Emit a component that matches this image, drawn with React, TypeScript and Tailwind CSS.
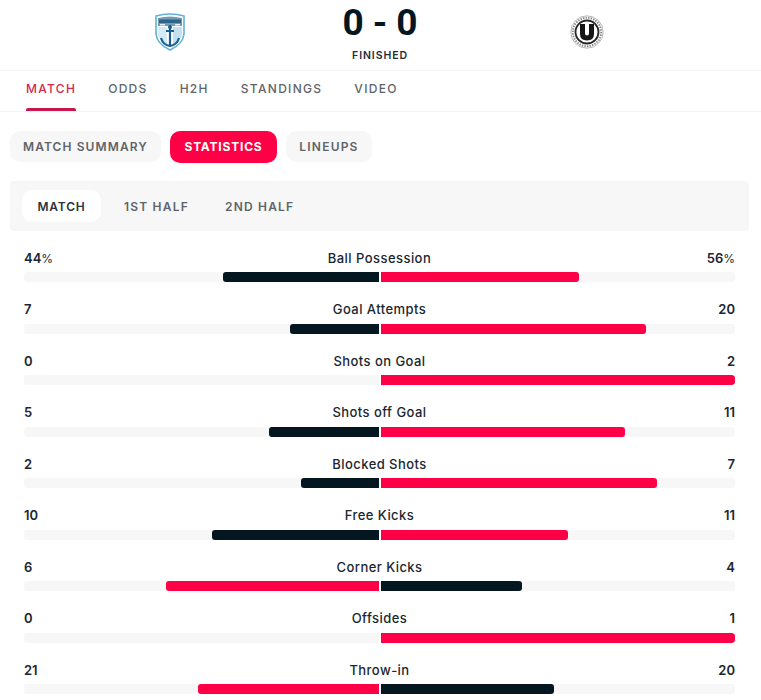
const tabs = ["MATCH", "ODDS", "H2H", "STANDINGS", "VIDEO"];

// label, home, away, home bar %, away bar %, unit
const stats: [string, number, number, number, number, string?][] = [
  ["Ball Possession", 44, 56, 44, 56, "%"],
  ["Goal Attempts", 7, 20, 25, 75],
  ["Shots on Goal", 0, 2, 0, 100],
  ["Shots off Goal", 5, 11, 31, 69],
  ["Blocked Shots", 2, 7, 22, 78],
  ["Free Kicks", 10, 11, 47, 53],
  ["Corner Kicks", 6, 4, 60, 40],
  ["Offsides", 0, 1, 0, 100],
  ["Throw-in", 21, 20, 51, 49],
];

function ShieldLogo() {
  return (
    <svg width="30" height="38" viewBox="0 0 30 38">
      <path d="M1 3 Q15 -1 29 3 L29 21 Q28 31 15 37 Q2 31 1 21 Z" fill="#ffffff" stroke="#62b1d8" strokeWidth="1.6" />
      <path d="M3 5 Q15 2 27 5 L27 13 L3 13 Z" fill="#6f9db8" />
      <rect x="4" y="6.5" width="22" height="3.5" fill="#2f6488" />
      <rect x="5" y="11" width="5" height="1.5" fill="#e4eff5" />
      <rect x="20" y="11" width="5" height="1.5" fill="#e4eff5" />
      <path d="M3 14 L12 14 L12 33 Q4 28 3 21 Z" fill="#d5ecf7" />
      <path d="M18 14 L27 14 L27 21 Q26 28 18 33 Z" fill="#bfe1f2" />
      <path d="M15 14 V33 M11 18 H19 M6 25 Q8 32 15 33 Q22 32 24 25" fill="none" stroke="#1b5f90" strokeWidth="2.2" />
      <circle cx="15" cy="14" r="2" fill="#1b5f90" />
    </svg>
  );
}

function CircleLogo() {
  return (
    <svg width="34" height="34" viewBox="0 0 34 34">
      <circle cx="17" cy="17" r="16.2" fill="#ffffff" stroke="#a8a8a8" strokeWidth="0.8" />
      <circle cx="17" cy="17" r="14.2" fill="none" stroke="#8a8a8a" strokeWidth="2" strokeDasharray="1.4 1.2" />
      <circle cx="17" cy="17" r="11.5" fill="#ffffff" stroke="#262626" strokeWidth="1.8" />
      <path d="M10 9 H15 V18.5 Q15 20.5 17 20.5 Q19 20.5 19 18.5 V9 H24 V19 Q24 25.5 17 25.5 Q10 25.5 10 19 Z" fill="#161616" />
    </svg>
  );
}

function StatRow({
  label,
  home,
  away,
  homeBar,
  awayBar,
  unit,
}: {
  label: string;
  home: number;
  away: number;
  homeBar: number;
  awayBar: number;
  unit?: string;
}) {
  const homeColor = home > away ? "bg-[#ff0046]" : "bg-[#04161f]";
  const awayColor = away > home ? "bg-[#ff0046]" : "bg-[#04161f]";

  return (
    <div className="h-[51.5px]">
      <div className="grid h-[24px] grid-cols-[1fr_auto_1fr] items-center text-[13px] font-medium leading-none tracking-[0.45px] text-[#1a2630]">
        <span className="font-semibold tracking-normal">
          {home}
          {unit && <span className="text-[12px] font-normal tracking-normal">{unit}</span>}
        </span>
        <span>{label}</span>
        <span className="text-right font-semibold tracking-normal">
          {away}
          {unit && <span className="text-[12px] font-normal tracking-normal">{unit}</span>}
        </span>
      </div>
      <div className="mt-[2px] flex h-[10px] gap-[2px]">
        <div className="flex flex-1 justify-end overflow-hidden rounded-l-[3px] bg-[#f7f7f7]">
          <div className={`h-full rounded-l-[3px] ${homeColor}`} style={{ width: `${homeBar}%` }} />
        </div>
        <div className="flex flex-1 overflow-hidden rounded-r-[3px] bg-[#f7f7f7]">
          <div className={`h-full rounded-r-[3px] ${awayColor}`} style={{ width: `${awayBar}%` }} />
        </div>
      </div>
    </div>
  );
}

export default function App() {
  return (
    <div className="h-[700px] w-[761px] overflow-hidden bg-white font-['Inter',sans-serif]">
      <header className="flex h-[71px] items-start border-b border-[#f3f3f3]">
        <div className="flex w-[340px] justify-center pt-[13px]">
          <ShieldLogo />
        </div>
        <div className="flex w-[80px] flex-col items-center">
          <div className="mt-[1px] flex h-[42px] items-center gap-[9px] font-['Roboto',sans-serif] text-[37px] font-bold leading-none text-[#04161f]">
            <span>0</span>
            <span>-</span>
            <span>0</span>
          </div>
          <div className="mt-[6px] text-[10.5px] font-semibold leading-[14px] tracking-[0.9px] text-[#1f2c35]">FINISHED</div>
        </div>
        <div className="flex w-[333px] justify-center pt-[15px]">
          <CircleLogo />
        </div>
      </header>

      <nav className="flex h-[41px] gap-[32px] border-b border-[#f3f3f3] pl-[26px]">
        {tabs.map((tab, i) => (
          <div
            key={tab}
            className={`relative pt-[11px] text-[12px] font-medium leading-[14px] tracking-[1.3px] ${
              i === 0 ? "text-[#d5244f]" : "text-[#5f6468]"
            }`}
          >
            {tab}
            {i === 0 && <div className="absolute bottom-0 left-0 h-[3px] w-full rounded-t-[2px] bg-[#c8174c]" />}
          </div>
        ))}
      </nav>

      <div className="mt-[19px] flex gap-[9px] pl-[10px]">
        <div className="flex h-[31px] w-[151px] items-center justify-center rounded-[10px] bg-[#f7f7f7] text-[12px] font-semibold tracking-[1.1px] text-[#5f6468]">
          MATCH SUMMARY
        </div>
        <div className="flex h-[32px] w-[107px] items-center justify-center rounded-[10px] bg-[#ff0046] text-[12px] font-bold tracking-[0.8px] text-white">
          STATISTICS
        </div>
        <div className="flex h-[31px] w-[86px] items-center justify-center rounded-[10px] bg-[#f7f7f7] text-[12px] font-semibold tracking-[1.2px] text-[#5f6468]">
          LINEUPS
        </div>
      </div>

      <div className="ml-[10px] mt-[18px] flex h-[50px] w-[739px] items-center rounded-[4px] bg-[#f7f7f7] pl-[12px]">
        <div className="flex h-[32px] w-[79px] items-center justify-center rounded-[10px] bg-white pt-[1px] text-[12px] font-semibold tracking-[0.8px] text-[#29353d]">
          MATCH
        </div>
        <div className="ml-[23px] pt-[1px] text-[12px] font-semibold tracking-[1.2px] text-[#5f6468]">1ST HALF</div>
        <div className="ml-[36px] pt-[1px] text-[12px] font-semibold tracking-[1.2px] text-[#5f6468]">2ND HALF</div>
      </div>

      <div className="mx-[24px] mt-[15px] w-[711px]">
        {stats.map(([label, home, away, homeBar, awayBar, unit]) => (
          <StatRow key={label} label={label} home={home} away={away} homeBar={homeBar} awayBar={awayBar} unit={unit} />
        ))}
      </div>
    </div>
  );
}
